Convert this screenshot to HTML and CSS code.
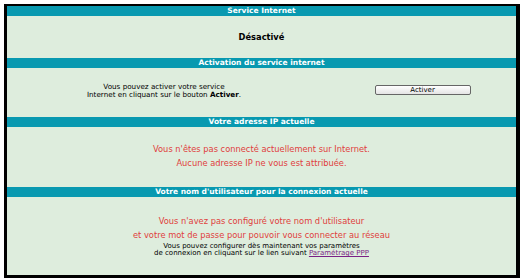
FILE: index.html
```html
<!DOCTYPE html>
<html lang="fr">
<head>
<meta charset="utf-8">
<title>Service Internet</title>
<link rel="stylesheet" href="styles.css">
</head>
<body>
<div class="panel">
  <div class="hdr">Service Internet</div>
  <div class="sec sec1"><b class="status">Désactivé</b></div>

  <div class="hdr">Activation du service internet</div>
  <div class="sec sec2">
    <div class="act-text">Vous pouvez activer votre service<br>Internet en cliquant sur le bouton <b>Activer</b>.</div>
    <div class="act-btn"><button class="btn">Activer</button></div>
  </div>

  <div class="hdr">Votre adresse IP actuelle</div>
  <div class="sec sec3">
    <div class="red">Vous n'êtes pas connecté actuellement sur Internet.</div>
    <div class="red">Aucune adresse IP ne vous est attribuée.</div>
  </div>

  <div class="hdr">Votre nom d'utilisateur pour la connexion actuelle</div>
  <div class="sec sec4">
    <div class="red">Vous n'avez pas configuré votre nom d'utilisateur</div>
    <div class="red">et votre mot de passe pour pouvoir vous connecter au réseau</div>
    <div class="small">Vous pouvez configurer dès maintenant vos paramètres<br>de connexion en cliquant sur le lien suivant <a href="#" class="link">Paramétrage PPP</a></div>
  </div>
</div>
</body>
</html>
```
FILE: styles.css
```css
html, body {
  margin: 0;
  padding: 0;
  background: #ffffff;
}
body {
  padding: 4px 3px 1px 4px;
  font-family: "DejaVu Sans", Verdana, sans-serif;
}
.panel {
  border-style: solid;
  border-color: #000;
  border-width: 2px 4px 3px 3px;
  background: #deeddd;
  color: #000;
}
.hdr {
  height: 10px;
  line-height: 10px;
  background: #0899b0;
  color: #ffffff;
  font-weight: bold;
  font-size: 7.5px;
  text-align: center;
  white-space: nowrap;
}
.sec {
  text-align: center;
}
.sec1 {
  height: 42px;
  display: flex;
  align-items: center;
  justify-content: center;
}
.status {
  font-size: 8.3px;
  font-weight: bold;
}
.sec2 {
  height: 49px;
  display: flex;
  align-items: flex-start;
}
.act-text {
  width: 314px;
  padding-top: 15px;
  font-size: 7.2px;
  line-height: 8px;
}
.act-btn {
  flex: 1;
  display: flex;
  justify-content: center;
  padding-top: 17px;
}
.btn {
  width: 96px;
  height: 10px;
  padding: 0;
  margin: 0 0 0 8px;
  font-family: "DejaVu Sans", Verdana, sans-serif;
  font-size: 7px;
  line-height: 8px;
  color: #000;
  background: linear-gradient(#ffffff, #e4e4e4);
  border: 1px solid #666;
  border-radius: 2px;
  box-sizing: border-box;
}
.sec3 {
  height: 60px;
  padding-top: 15px;
  box-sizing: border-box;
}
.red {
  color: #e0403c;
  font-size: 8.3px;
  line-height: 14px;
  white-space: nowrap;
}
.sec4 {
  height: 78px;
  padding-top: 17px;
  box-sizing: border-box;
}
.small {
  font-size: 7px;
  line-height: 7px;
  padding-top: 1px;
}
.link {
  color: #7a1f86;
  text-decoration: underline;
}
```
